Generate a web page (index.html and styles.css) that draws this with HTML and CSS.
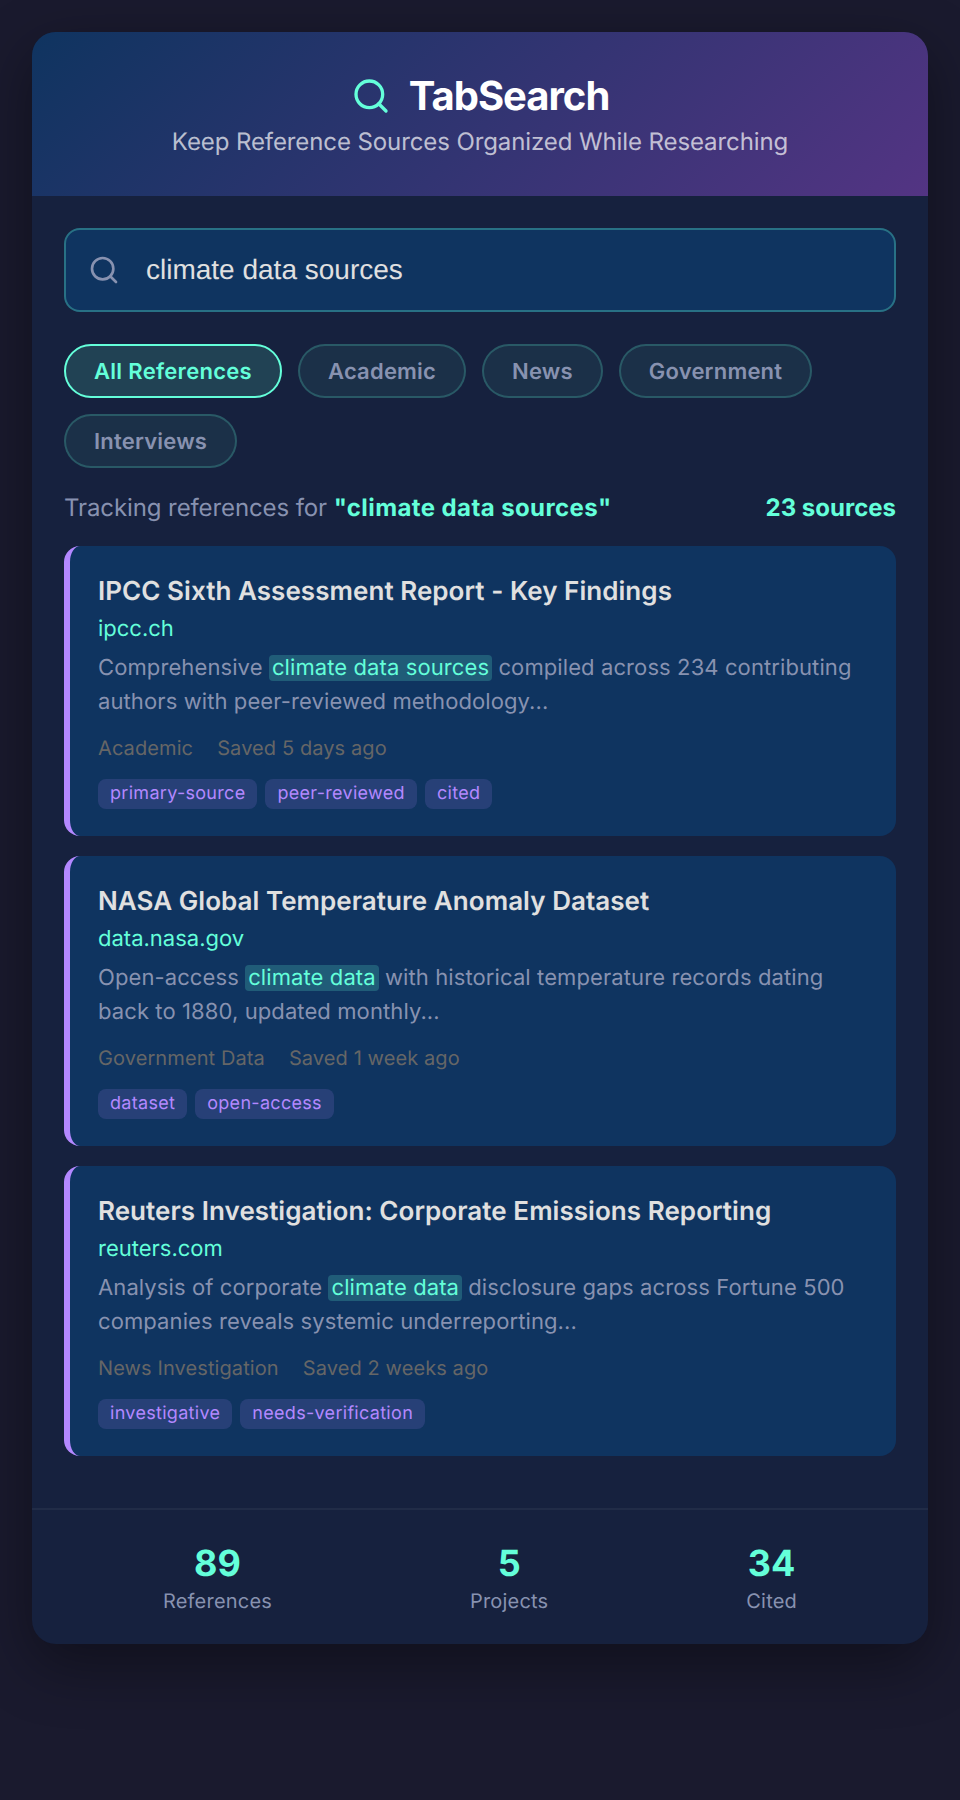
FILE: index.html
```html
<!DOCTYPE html>
<html>
<head>
    <title>TabSearch</title>
    <link rel="stylesheet" href="styles.css">
</head>
<body>
    <div class="app">
        <div class="header">
            <div class="logo">
                <svg class="logo-icon" viewBox="0 0 24 24" fill="none" stroke="currentColor" stroke-width="2" stroke-linecap="round"><circle cx="11" cy="11" r="8"></circle><path d="M21 21l-4.35-4.35"></path></svg>
                <h1>TabSearch</h1>
            </div>
            <p class="tagline">Keep Reference Sources Organized While Researching</p>
        </div>

        <div class="main">
            <div class="search-box">
                <svg class="search-icon" viewBox="0 0 24 24" fill="none" stroke="currentColor" stroke-width="2" stroke-linecap="round"><circle cx="11" cy="11" r="8"></circle><path d="M21 21l-4.35-4.35"></path></svg>
                <span class="search-text">climate data sources</span>
            </div>

            <div class="filters">
                <span class="chip active">All References</span>
                <span class="chip">Academic</span>
                <span class="chip">News</span>
                <span class="chip">Government</span>
                <span class="chip">Interviews</span>
            </div>

            <div class="results-info">
                <span>Tracking references for <strong>"climate data sources"</strong></span>
                <span class="count">23 sources</span>
            </div>

            <div class="card">
                <h3>IPCC Sixth Assessment Report - Key Findings</h3>
                <div class="url">ipcc.ch</div>
                <p class="desc">Comprehensive <mark>climate data sources</mark> compiled across 234 contributing authors with peer-reviewed methodology...</p>
                <div class="meta"><span>Academic</span><span>Saved 5 days ago</span></div>
                <div class="tags"><span class="tag">primary-source</span><span class="tag">peer-reviewed</span><span class="tag">cited</span></div>
            </div>

            <div class="card">
                <h3>NASA Global Temperature Anomaly Dataset</h3>
                <div class="url">data.nasa.gov</div>
                <p class="desc">Open-access <mark>climate data</mark> with historical temperature records dating back to 1880, updated monthly...</p>
                <div class="meta"><span>Government Data</span><span>Saved 1 week ago</span></div>
                <div class="tags"><span class="tag">dataset</span><span class="tag">open-access</span></div>
            </div>

            <div class="card">
                <h3>Reuters Investigation: Corporate Emissions Reporting</h3>
                <div class="url">reuters.com</div>
                <p class="desc">Analysis of corporate <mark>climate data</mark> disclosure gaps across Fortune 500 companies reveals systemic underreporting...</p>
                <div class="meta"><span>News Investigation</span><span>Saved 2 weeks ago</span></div>
                <div class="tags"><span class="tag">investigative</span><span class="tag">needs-verification</span></div>
            </div>
        </div>

        <div class="stats">
            <div class="stat"><div class="stat-value">89</div><div class="stat-label">References</div></div>
            <div class="stat"><div class="stat-value">5</div><div class="stat-label">Projects</div></div>
            <div class="stat"><div class="stat-value">34</div><div class="stat-label">Cited</div></div>
        </div>
    </div>
</body>
</html>
```

FILE: styles.css
```css
* {
    box-sizing: border-box;
}

body {
    margin: 0;
    padding: 32px;
    min-height: 1800px;
    background-color: #1a1a2e;
    font-family: Inter, "Liberation Sans", sans-serif;
    text-rendering: geometricPrecision;
}

.app {
    background-color: #16213e;
    border-radius: 24px;
    overflow: hidden;
    box-shadow: 0 20px 60px rgba(0, 0, 0, 0.4);
}

.header {
    height: 164px;
    padding-top: 40px;
    text-align: center;
    background: linear-gradient(135deg, #0f3460, #533483);
}

.logo {
    display: flex;
    justify-content: center;
    align-items: center;
    gap: 18px;
    color: #64ffda;
}

.logo-icon {
    width: 40px;
    height: 40px;
}

.logo h1 {
    margin: 0;
    font-size: 40px;
    line-height: 48px;
    font-weight: 700;
    letter-spacing: -1px;
    color: #fff;
}

.tagline {
    margin: 6px 0 0;
    font-size: 24px;
    line-height: 32px;
    letter-spacing: -0.1px;
    color: rgba(255, 255, 255, 0.7);
}

.main {
    padding: 32px 32px 52px;
}

.search-box {
    display: flex;
    align-items: center;
    height: 84px;
    padding: 0 22px;
    background-color: #0f3460;
    border: 2px solid rgba(100, 255, 218, 0.3);
    border-radius: 16px;
}

.search-icon {
    width: 32px;
    height: 32px;
    color: #8892b0;
}

.search-text {
    margin-left: 26px;
    font-family: "Liberation Sans", Arial, sans-serif;
    font-size: 28px;
    color: #e0e0e0;
}

.filters {
    display: flex;
    flex-wrap: wrap;
    gap: 16px;
    margin-top: 32px;
}

.chip {
    padding: 13px 28px 11px;
    font-size: 22px;
    line-height: 26px;
    font-weight: 600;
    letter-spacing: 0.2px;
    color: #8892b0;
    background-color: rgba(100, 255, 218, 0.07);
    border: 2px solid rgba(100, 255, 218, 0.2);
    border-radius: 30px;
}

.chip.active {
    letter-spacing: 0.3px;
    color: #64ffda;
    background-color: rgba(100, 255, 218, 0.15);
    border-color: #64ffda;
}

.results-info {
    display: flex;
    justify-content: space-between;
    margin: 25px 0 23px;
    font-size: 24px;
    line-height: 30px;
    letter-spacing: -0.1px;
    color: #8892b0;
}

.results-info strong {
    font-weight: 700;
    letter-spacing: 0.4px;
    color: #64ffda;
}

.count {
    font-weight: 700;
    letter-spacing: 0;
    color: #64ffda;
}

.card {
    margin-bottom: 20px;
    padding: 29px 28px 27px;
    background-color: #0f3460;
    border-left: 6px solid #b388ff;
    border-radius: 16px;
}

.card:last-child {
    margin-bottom: 0;
}

.card h3 {
    margin: 0;
    font-size: 26px;
    line-height: 34px;
    font-weight: 600;
    letter-spacing: 0.05px;
    color: #e0e0e0;
}

.url {
    margin-top: 6px;
    font-size: 22px;
    line-height: 28px;
    color: #64ffda;
}

.desc {
    margin: 8px 0 0;
    font-size: 22px;
    line-height: 34px;
    letter-spacing: 0.1px;
    color: #8892b0;
}

.desc mark {
    padding: 0 3px;
    color: #64ffda;
    background-color: rgba(100, 255, 218, 0.2);
    border-radius: 4px;
}

.meta {
    display: flex;
    gap: 24px;
    margin-top: 16px;
    font-size: 20px;
    line-height: 26px;
    letter-spacing: 0.1px;
    color: #666;
}

.tags {
    display: flex;
    gap: 8px;
    margin-top: 18px;
}

.tag {
    padding: 4px 12px;
    font-size: 18px;
    line-height: 22px;
    letter-spacing: 0.3px;
    color: #b388ff;
    background-color: rgba(179, 136, 255, 0.15);
    border-radius: 8px;
}

.stats {
    display: flex;
    justify-content: space-around;
    padding: 31px 32px 30px;
    border-top: 2px solid rgba(255, 255, 255, 0.05);
}

.stat {
    text-align: center;
}

.stat-value {
    font-size: 36px;
    line-height: 44px;
    font-weight: 700;
    color: #64ffda;
}

.stat-label {
    margin-top: 3px;
    font-size: 20px;
    line-height: 26px;
    letter-spacing: 0.2px;
    color: #8892b0;
}
```
